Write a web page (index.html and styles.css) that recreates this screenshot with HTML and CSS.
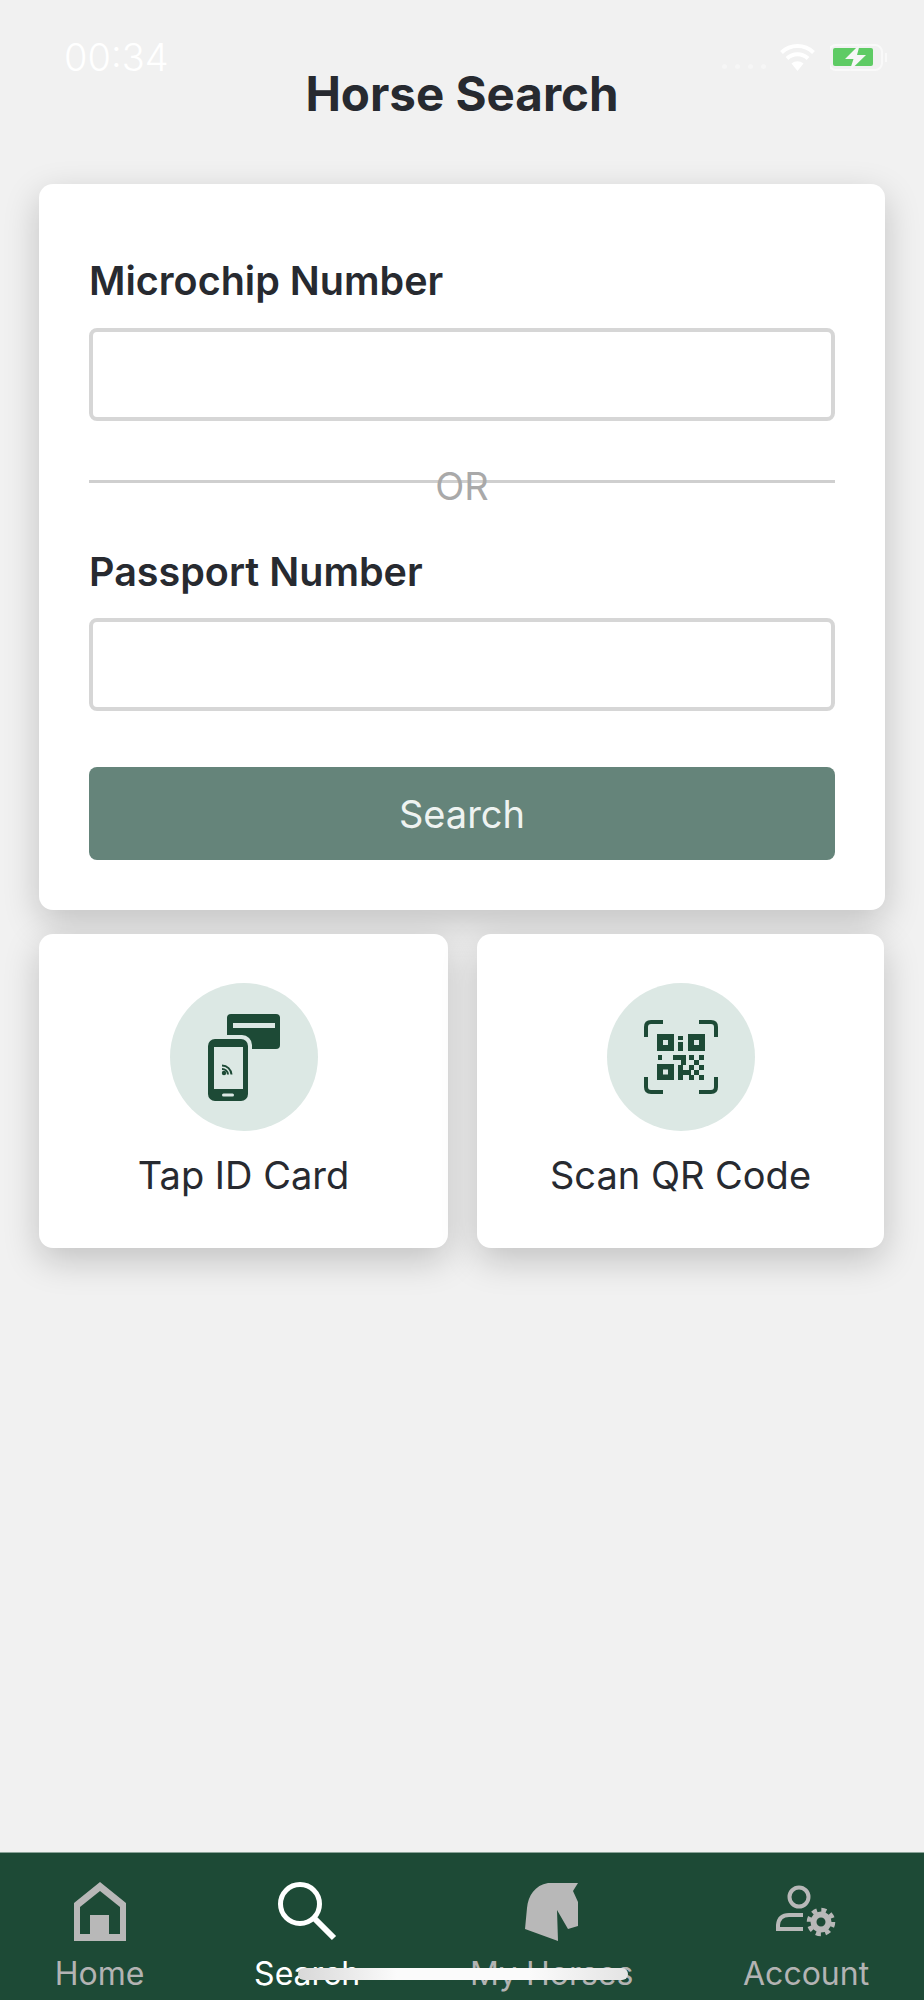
FILE: index.html
```html
<!DOCTYPE html>
<html lang="en">

<head>
    <meta charset="UTF-8">
    <title>Horse Search</title>
    <link rel="stylesheet" href="styles.css">
</head>

<body>
    <div class="status-bar">
        <span class="status-time">00:34</span>
        <div class="status-icons">
            <div class="status-dots"><i></i><i></i><i></i><i></i></div>
            <svg class="status-wifi" width="37" height="27" viewBox="0 0 37 27">
                <path d="M18.5 27 L12.5 19.5 A9.5 9.5 0 0 1 24.5 19.5 Z" fill="#fff"/>
                <path d="M8 14.5 A15 15 0 0 1 29 14.5" fill="none" stroke="#fff" stroke-width="4"/>
                <path d="M2.5 8.5 A23 23 0 0 1 34.5 8.5" fill="none" stroke="#fff" stroke-width="4"/>
            </svg>
            <svg class="status-battery" width="58" height="27" viewBox="0 0 58 27">
                <rect x="-1" y="1" width="53" height="25" rx="7" fill="none" stroke="#fff" stroke-opacity="0.6" stroke-width="2"/>
                <rect x="55" y="9" width="2" height="9" fill="#fff" fill-opacity="0.6"/>
                <rect x="3" y="4" width="40" height="18" rx="2" fill="#5ecb64"/>
                <path d="M30 0 L15 15 H23.500 L19.500 27 L36 11 H27 Z" fill="#f6f6f6"/>
            </svg>
        </div>
    </div>

    <h1 class="page-title">Horse Search</h1>

    <main class="content">
        <form class="card search-form" action="#" method="POST">
            <label class="field-label" for="microchip">Microchip Number</label>
            <input class="field-input" type="text" id="microchip" name="microchip">
            <div class="divider"><span>OR</span></div>
            <label class="field-label field-label-second" for="passport">Passport Number</label>
            <input class="field-input" type="text" id="passport" name="passport">
            <button class="search-button" type="submit">Search</button>
        </form>

        <div class="actions">
            <a class="card action" href="#">
                <span class="action-circle">
                    <svg width="72" height="87" viewBox="0 0 72 87">
                        <rect x="19" y="0" width="53" height="35" rx="4" fill="#1d4a36"/>
                        <rect x="25" y="9" width="42" height="5" fill="#dce8e4"/>
                        <rect x="-4" y="21" width="48" height="70" rx="10" fill="#dce8e4"/>
                        <rect x="0" y="25" width="40" height="62" rx="7" fill="#1d4a36"/>
                        <rect x="6" y="33" width="29" height="42" fill="#dce8e4"/>
                        <rect x="14" y="79.500" width="12" height="3" rx="1.500" fill="#dce8e4"/>
                        <circle cx="16" cy="59" r="2.200" fill="#1d4a36"/>
                        <path d="M14 51.500 A9.500 9.500 0 0 1 23.500 60.500 M14 55 A6 6 0 0 1 20 60.500" fill="none" stroke="#1d4a36" stroke-width="2"/>
                    </svg>
                </span>
                <span class="action-label">Tap ID Card</span>
            </a>
            <a class="card action" href="#">
                <span class="action-circle">
                    <svg width="74" height="74" viewBox="0 0 74 74">
                        <path d="M2 17 V7 Q2 2 7 2 H19 M55 2 H67 Q72 2 72 7 V17 M72 57 V67 Q72 72 67 72 H55 M19 72 H7 Q2 72 2 67 V57" fill="none" stroke="#1d4a36" stroke-width="4"/>
                        <path fill-rule="evenodd" fill="#1d4a36" d="M13 14 H30 V31 H13 Z M19 20 V25 H24 V20 Z M44 14 H61 V31 H44 Z M50 20 V25 H55 V20 Z M13 44 H30 V60 H13 Z M19 49.500 V54.500 H24 V49.500 Z"/>
                        <g fill="#1d4a36">
                            <rect x="34" y="16" width="5" height="4"/>
                            <rect x="34" y="22" width="5" height="9"/>
                            <rect x="14" y="35" width="4" height="5"/>
                            <rect x="29" y="35" width="13" height="5"/>
                            <rect x="37" y="40" width="5" height="5"/>
                            <rect x="45" y="35" width="5" height="5"/>
                            <rect x="55" y="35" width="5" height="5"/>
                            <rect x="50" y="40" width="5" height="5"/>
                            <rect x="45" y="45" width="5" height="5"/>
                            <rect x="55" y="45" width="5" height="5"/>
                            <rect x="50" y="50" width="5" height="5"/>
                            <rect x="34" y="45" width="5" height="15"/>
                            <rect x="39" y="50" width="8" height="5"/>
                            <rect x="45" y="55" width="5" height="5"/>
                            <rect x="55" y="55" width="5" height="5"/>
                        </g>
                    </svg>
                </span>
                <span class="action-label">Scan QR Code</span>
            </a>
        </div>
    </main>

    <nav class="tab-bar">
        <a class="tab" href="#">
            <svg class="tab-icon" width="54" height="59" viewBox="0 0 54 59">
                <path fill-rule="evenodd" fill="#b8b8b8" d="M27 0 L53 21 V59 H1 V21 Z M27 9 L7 25 V52 H17 V33 H36 V52 H47 V25 Z"/>
            </svg>
            <span>Home</span>
        </a>
        <a class="tab tab-active" href="#">
            <svg class="tab-icon" width="62" height="59" viewBox="0 0 62 59">
                <circle cx="24" cy="22" r="19.500" fill="none" stroke="#fff" stroke-width="5"/>
                <path d="M38 36 L58 56" fill="none" stroke="#fff" stroke-width="6"/>
            </svg>
            <span>Search</span>
        </a>
        <a class="tab" href="#">
            <svg class="tab-icon" width="54" height="59" viewBox="0 0 54 59">
                <path fill="#b8b8b8" d="M0 47 L33 59 L32 28 L43 47 L53 44 L53 20 L48 9 L53 1 H23 C10 3 3 14 2 26 Z"/>
            </svg>
            <span>My Horses</span>
        </a>
        <a class="tab" href="#">
            <svg class="tab-icon" width="62" height="59" viewBox="0 0 62 59">
                <g fill="none" stroke="#b8b8b8">
                    <circle cx="24" cy="15" r="9.500" stroke-width="4"/>
                    <path d="M28 33 H14 Q4 33 3 43 V47 H28" stroke-width="4"/>
                    <circle cx="46" cy="40" r="7.500" stroke-width="6"/>
                    <circle cx="46" cy="40" r="12" stroke-width="4.500" stroke-dasharray="5 4.420"/>
                </g>
            </svg>
            <span>Account</span>
        </a>
    </nav>

    <div class="home-indicator"></div>
</body>

</html>
```

FILE: styles.css
```css
* {
    box-sizing: border-box;
}

body {
    font-family: Inter, "Noto Sans", sans-serif;
    background-color: #f1f1f1;
    color: #272a30;
    margin: 0;
    width: 924px;
    height: 2000px;
    display: flex;
    flex-direction: column;
    position: relative;
    overflow: hidden;
}

a {
    color: inherit;
    text-decoration: none;
}

.status-bar {
    position: absolute;
    top: 38px;
    left: 64px;
    right: 36px;
    display: flex;
    justify-content: space-between;
    align-items: center;
    color: #fff;
}

.status-time {
    font-size: 38px;
    font-weight: 300;
    line-height: 38px;
}

.status-icons {
    display: flex;
    align-items: center;
    gap: 14px;
}

.status-dots {
    display: flex;
    gap: 8px;
    margin: 18px -1px 0 0;
}

.status-dots i {
    width: 5px;
    height: 5px;
    border-radius: 50%;
    background-color: rgba(255, 255, 255, 0.35);
}

.page-title {
    margin: 66px 0 62px;
    font-size: 47.500px;
    font-weight: 700;
    line-height: 56px;
    text-align: center;
}

.content {
    flex: 1;
    padding: 0 39px;
}

.card {
    background-color: #fff;
    border-radius: 14px;
    box-shadow: 0 12px 36px rgba(0, 0, 0, 0.2);
}

.search-form {
    display: flex;
    flex-direction: column;
    padding: 50px 50px 50px;
}

.field-label {
    font-size: 39.500px;
    font-weight: 600;
    line-height: 44px;
    padding-top: 25px;
    margin-bottom: 25px;
}

.field-label-second {
    padding-top: 67px;
    margin-bottom: 24px;
}

.field-input {
    height: 93px;
    border: 4px solid #d6d6d6;
    border-radius: 8px;
    background-color: #fff;
}

.divider {
    position: relative;
    height: 3px;
    margin-top: 59px;
    background-color: #cfcfcf;
}

.divider span {
    position: absolute;
    left: 50%;
    top: -16px;
    transform: translateX(-50%);
    font-size: 38px;
    line-height: 44px;
    color: #a9a9a9;
}

.search-button {
    height: 93px;
    margin-top: 56px;
    border: none;
    border-radius: 8px;
    background-color: #65847a;
    color: #eef3f1;
    font-family: inherit;
    font-size: 38px;
}

.actions {
    display: grid;
    grid-template-columns: 409px 407px;
    gap: 29px;
    margin-top: 24px;
}

.action {
    display: flex;
    flex-direction: column;
    align-items: center;
    padding: 49px 0 51px;
}

.action-circle {
    width: 148px;
    height: 148px;
    border-radius: 50%;
    background-color: #dce8e4;
    display: flex;
    align-items: center;
    justify-content: center;
}

.action-label {
    margin-top: 22px;
    font-size: 38px;
    line-height: 44px;
}

.tab-bar {
    height: 148px;
    padding-top: 29px;
    background-color: #1d4a36;
    border-top: 1px solid #8aa398;
    display: flex;
    justify-content: space-around;
}

.tab {
    display: flex;
    flex-direction: column;
    align-items: center;
    font-size: 32px;
    line-height: 44px;
    color: #b3b3b3;
}

.tab-active {
    color: #fff;
}

.tab-icon {
    margin-bottom: 11px;
}

.home-indicator {
    position: absolute;
    left: 298px;
    top: 1968px;
    width: 330px;
    height: 12px;
    border-radius: 6px;
    background: linear-gradient(90deg, #d8d8d8, #fbfbfb 30%, #fbfbfb 70%, #e4e4e4);
}
```
